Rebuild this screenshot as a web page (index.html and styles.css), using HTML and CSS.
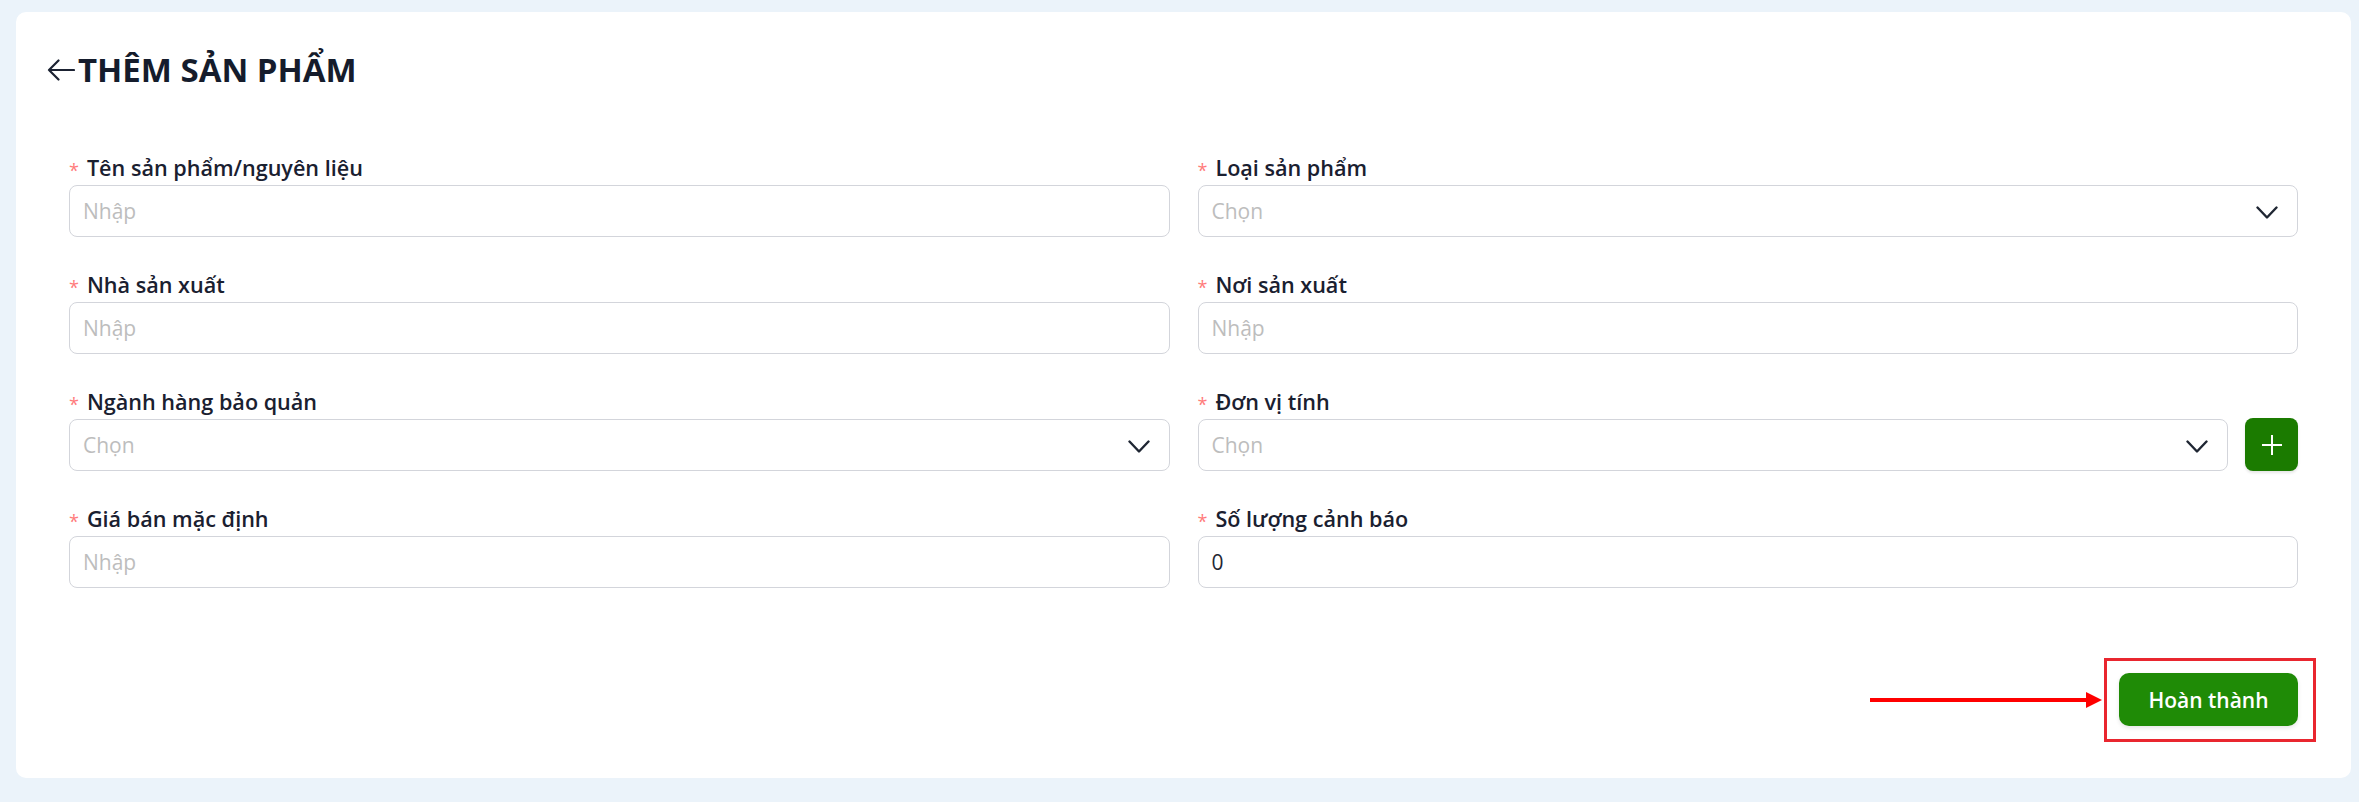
FILE: index.html
```html
<!DOCTYPE html>
<html lang="vi">
<head>
<meta charset="utf-8">
<title>Thêm sản phẩm</title>
<link rel="stylesheet" href="styles.css">
</head>
<body>
<div class="page">
  <div class="card">
    <div class="header">
      <svg class="back" viewBox="0 0 28 22" aria-hidden="true">
        <path d="M27 11H2M11.5 1.5L2 11l9.5 9.5" fill="none" stroke="#1b2232" stroke-width="2.2" stroke-linecap="round" stroke-linejoin="round"/>
      </svg>
      <h1 class="title">THÊM SẢN PHẨM</h1>
    </div>
    <div class="form">
      <div class="grid">
        <div class="field">
          <div class="label"><span class="req">*</span>Tên sản phẩm/nguyên liệu</div>
          <div class="control"><span class="placeholder">Nhập</span></div>
        </div>
        <div class="field">
          <div class="label"><span class="req">*</span>Loại sản phẩm</div>
          <div class="control"><span class="placeholder">Chọn</span>
            <svg class="chev" viewBox="0 0 22 13" aria-hidden="true"><path d="M1.5 1.5L11 11.5l9.5-10" fill="none" stroke="#1f2633" stroke-width="2.4" stroke-linecap="round" stroke-linejoin="round"/></svg>
          </div>
        </div>
        <div class="field">
          <div class="label"><span class="req">*</span>Nhà sản xuất</div>
          <div class="control"><span class="placeholder">Nhập</span></div>
        </div>
        <div class="field">
          <div class="label"><span class="req">*</span>Nơi sản xuất</div>
          <div class="control"><span class="placeholder">Nhập</span></div>
        </div>
        <div class="field">
          <div class="label"><span class="req">*</span>Ngành hàng bảo quản</div>
          <div class="control"><span class="placeholder">Chọn</span>
            <svg class="chev" viewBox="0 0 22 13" aria-hidden="true"><path d="M1.5 1.5L11 11.5l9.5-10" fill="none" stroke="#1f2633" stroke-width="2.4" stroke-linecap="round" stroke-linejoin="round"/></svg>
          </div>
        </div>
        <div class="field">
          <div class="label"><span class="req">*</span>Đơn vị tính</div>
          <div class="with-add">
            <div class="control"><span class="placeholder">Chọn</span>
              <svg class="chev" viewBox="0 0 22 13" aria-hidden="true"><path d="M1.5 1.5L11 11.5l9.5-10" fill="none" stroke="#1f2633" stroke-width="2.4" stroke-linecap="round" stroke-linejoin="round"/></svg>
            </div>
            <div class="add">
              <svg viewBox="0 0 20 20" aria-hidden="true"><path d="M10 0v20M0 10h20" fill="none" stroke="#ffffff" stroke-width="2"/></svg>
            </div>
          </div>
        </div>
        <div class="field">
          <div class="label"><span class="req">*</span>Giá bán mặc định</div>
          <div class="control"><span class="placeholder">Nhập</span></div>
        </div>
        <div class="field">
          <div class="label"><span class="req">*</span>Số lượng cảnh báo</div>
          <div class="control"><span class="value">0</span></div>
        </div>
      </div>
      <div class="footer">
        <div class="submit-wrap">
          <span class="annot-arrow"></span>
          <span class="annot-box"></span>
          <button class="btn-submit" type="button">Hoàn thành</button>
        </div>
      </div>
    </div>
  </div>
</div>
</body>
</html>
```

FILE: styles.css
```css
html, body {
  margin: 0;
  padding: 0;
  background: #ebf3fa;
  font-family: "Open Sans", "Noto Sans", "Liberation Sans", sans-serif;
}

.page {
  padding: 12px 8px 25px 16px;
}

.card {
  background: #ffffff;
  border-radius: 10px;
  height: 766px;
  box-sizing: border-box;
  padding-top: 38px;
}

.header {
  display: flex;
  align-items: center;
  height: 40px;
  padding-left: 31px;
  gap: 3px;
}

.back {
  width: 28px;
  height: 22px;
  display: block;
}

.title {
  margin: 0;
  font-size: 33px;
  line-height: 40px;
  font-weight: 700;
  color: #151c2c;
}

.form {
  padding: 0 53px;
  margin-top: 63px;
}

.grid {
  display: grid;
  grid-template-columns: 1fr 1fr;
  column-gap: 28px;
  row-gap: 33px;
}

.label {
  display: flex;
  align-items: center;
  font-size: 21.6px;
  line-height: 30px;
  font-weight: 600;
  color: #1a2030;
  margin-bottom: 2px;
}

.req {
  color: #ff7b7b;
  font-size: 18px;
  font-weight: 400;
  margin-right: 8px;
  position: relative;
  top: 2px;
}

.control {
  height: 52px;
  box-sizing: border-box;
  border: 1px solid #d3d5db;
  border-radius: 8px;
  display: flex;
  align-items: center;
  padding: 0 19px 0 13px;
  font-size: 21px;
  background: #ffffff;
}

.placeholder {
  color: #bdbdbd;
  flex: 1;
}

.value {
  color: #1f2633;
  flex: 1;
}

.chev {
  width: 22px;
  height: 13px;
  display: block;
  margin-top: 3px;
}

.with-add {
  display: flex;
  gap: 17px;
}

.with-add .control {
  flex: 1;
}

.add {
  width: 53px;
  height: 53px;
  margin-top: -1px;
  border-radius: 8px;
  background: #1b7b00;
  display: flex;
  align-items: center;
  justify-content: center;
  box-shadow: 0 2px 3px rgba(0, 0, 0, 0.1);
}

.add svg {
  width: 20px;
  height: 20px;
  display: block;
}

.footer {
  display: flex;
  justify-content: flex-end;
  margin-top: 85px;
}

.submit-wrap {
  position: relative;
  display: flex;
}

.btn-submit {
  width: 179px;
  height: 53px;
  border: none;
  border-radius: 10px;
  background: #1f8b06;
  color: #ffffff;
  font-family: "Open Sans", "Noto Sans", sans-serif;
  font-size: 21px;
  font-weight: 600;
  box-shadow: 0 2px 4px rgba(0, 0, 0, 0.1);
  padding: 0;
}

.annot-box {
  position: absolute;
  left: -15px;
  top: -15px;
  right: -18px;
  bottom: -16px;
  border: 3px solid #e9262f;
  pointer-events: none;
}

.annot-arrow {
  position: absolute;
  right: calc(100% + 17px);
  top: 50%;
  width: 232px;
  height: 16px;
  margin-top: -8px;
  display: flex;
  align-items: center;
}

.annot-arrow::before {
  content: "";
  flex: 1;
  height: 4px;
  background: #ff0000;
}

.annot-arrow::after {
  content: "";
  width: 0;
  height: 0;
  border-left: 16px solid #ff0000;
  border-top: 8px solid transparent;
  border-bottom: 8px solid transparent;
}
```
